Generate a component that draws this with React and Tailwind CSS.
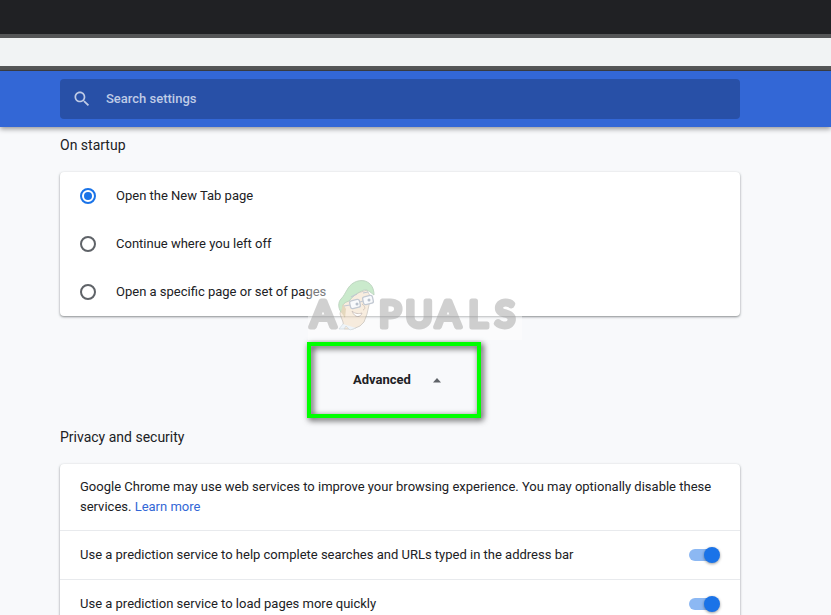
import React from "react";

const startupOptions = [
  "Open the New Tab page",
  "Continue where you left off",
  "Open a specific page or set of pages",
];

const privacyToggles = [
  "Use a prediction service to help complete searches and URLs typed in the address bar",
  "Use a prediction service to load pages more quickly",
];

function SearchBar() {
  return (
    <header className="relative z-10 shrink-0 bg-[#3367d6] py-2 pr-[91px] pl-[60px] shadow-[0_2px_5px_rgba(0,0,0,0.4)]">
      <label className="flex h-10 max-w-[680px] items-center rounded-sm bg-[#2850a7] pl-3 text-[#bfcbe6]">
        <svg viewBox="0 0 24 24" className="size-5 shrink-0" fill="currentColor" aria-hidden="true">
          <path d="M15.5 14h-.79l-.28-.27C15.41 12.59 16 11.11 16 9.500 16 5.910 13.090 3 9.500 3S3 5.910 3 9.500 5.910 16 9.500 16c1.610 0 3.090-.59 4.230-1.570l.27.28v.79l5 4.990L20.490 19l-4.990-5zm-6 0C7.010 14 5 11.990 5 9.500S7.010 5 9.500 5 14 7.010 14 9.500 11.990 14 9.500 14z" />
        </svg>
        <input
          type="text"
          aria-label="Search settings"
          placeholder="Search settings"
          className="ml-3.5 h-full min-w-0 flex-1 bg-transparent pb-0.5 font-medium text-white outline-none placeholder:text-[#bfcbe6]"
        />
      </label>
    </header>
  );
}

function Section({ title, children }) {
  return (
    <section className="pt-2">
      <h2 className="mb-[17px] text-[14px] leading-5">{title}</h2>
      <div className="relative rounded bg-white shadow-[0_1px_2px_rgba(60,64,67,0.4),0_1px_3px_rgba(60,64,67,0.25)]">
        {children}
      </div>
    </section>
  );
}

function RadioRow({ label, defaultChecked }) {
  return (
    <label className="flex h-12 items-center gap-5 px-5">
      <input
        type="radio"
        name="startup"
        defaultChecked={defaultChecked}
        className="grid size-4 shrink-0 appearance-none place-items-center rounded-full border-2 border-[#5f6368] checked:border-[#1a73e8] checked:before:size-2 checked:before:rounded-full checked:before:bg-[#1a73e8]"
      />
      {label}
    </label>
  );
}

function ToggleRow({ label }) {
  return (
    <label className="flex h-[49px] items-center justify-between gap-4 border-t border-[#e8eaed] px-5">
      {label}
      <span className="relative flex h-4 w-8 shrink-0 items-center">
        <input type="checkbox" defaultChecked className="peer sr-only" />
        <span className="ml-px h-3 w-7 rounded-full bg-[#bdc1c6] peer-checked:bg-[#8cb8f3]" />
        <span className="absolute left-0 size-4 rounded-full bg-white shadow-[0_1px_3px_rgba(0,0,0,0.4)] peer-checked:left-4 peer-checked:bg-[#1a73e8]" />
      </span>
    </label>
  );
}

function Watermark() {
  return (
    <svg
      viewBox="0 0 214 64"
      className="pointer-events-none absolute -bottom-6 left-[248px] z-10 h-16 w-[214px]"
      aria-hidden="true"
    >
      <rect y="7" width="214" height="57" fill="#fff" opacity="0.4" />
      <g opacity="0.5">
        <g
          fontFamily="Lato, sans-serif"
          fontSize="37"
          fill="#a2a2a2"
          stroke="#a2a2a2"
          strokeWidth="5"
          strokeLinejoin="round"
          strokeLinecap="round"
          textAnchor="middle"
        >
          <text x="15" y="51">A</text>
          <text x="82 111 140 170 197" y="51">PUALS</text>
        </g>
        <path d="M34 28 41 22 50 17 59 14 62 20 61 29 59 38 56 46 52 50 45 53 36 53 35 46 32 38Z" fill="#f3dcc0" stroke="#9b9284" strokeWidth="0.800" />
        <path d="M33 36C30 32 30 26 33 23 36 20 37 17 39 14 42 8 49 3 57 5 63 7 66 12 66 19 62 16 59 13 56 14 50 16 45 20 41 25 38 26 36 27 35 29L34 36Z" fill="#96d69a" stroke="#7ba780" strokeWidth="0.900" strokeLinejoin="round" />
        <path d="M33 36 35 28 38 33 37 42" fill="#cdb27d" />
        <g fill="#f4f7fa" stroke="#8794a7" strokeWidth="1.300">
          <rect x="42" y="24" width="10" height="8" rx="2" transform="rotate(-13 47 28)" />
          <rect x="55" y="20" width="10" height="8" rx="2" transform="rotate(-13 60 24)" />
        </g>
        <path d="m36 30 6-1m10-3 3-1M43 21l6-3m6-1 5-1" fill="none" stroke="#8794a7" strokeWidth="1.200" />
        <circle cx="49" cy="28" r="1.500" fill="#73839a" />
        <circle cx="61" cy="24" r="1.500" fill="#73839a" />
        <path d="M54 28c3 2 4 5 1 6" fill="none" stroke="#aa8f76" />
        <path d="M44 35c3 3 7 3 10 2-1 4-7 6-10-2Z" fill="#fff" stroke="#9b8579" strokeWidth="0.900" />
        <path d="m35 48-4 5h5l2-3 4 4 6-2" fill="#e2eff7" stroke="#a6b7c1" strokeWidth="0.700" />
      </g>
    </svg>
  );
}

export default function App() {
  return (
    <div className="flex h-screen flex-col overflow-hidden bg-[#f8f9fb] font-['Roboto',sans-serif] text-[13px] leading-5 text-[#202124]">
      <div className="h-[34px] shrink-0 bg-[#202124]" />
      <div className="h-9 shrink-0 border-y-4 border-[#555657] bg-[#f1f3f4]" />
      <div className="h-px shrink-0 bg-[#3c3f45]" />
      <SearchBar />
      <main className="min-h-0 flex-1 overflow-hidden pr-[91px] pl-[60px]">
        <div className="max-w-[680px]">
          <Section title="On startup">
            {startupOptions.map((label, i) => (
              <RadioRow key={label} label={label} defaultChecked={i === 0} />
            ))}
            <Watermark />
          </Section>

          <div className="mt-[26px] mb-px flex justify-center">
            <button type="button" className="relative flex h-[76px] w-[174px] items-center pl-10 font-bold">
              Advanced
              <svg viewBox="0 0 24 24" className="ml-3.5 size-6" fill="#5f6368" aria-hidden="true">
                <path d="M8 14.500 12 10 16 14.500Z" />
              </svg>
              <span className="absolute inset-y-0 right-1.5 -left-1.5 border-4 border-[#00ff00] drop-shadow-[2px_2px_3px_rgba(0,0,0,0.8)]" />
            </button>
          </div>

          <Section title="Privacy and security">
            <p className="px-5 py-[13px]">
              Google Chrome may use web services to improve your browsing experience. You may
              optionally disable these services.{" "}
              <a href="#learn-more" className="text-[#3367d6]">
                Learn more
              </a>
            </p>
            {privacyToggles.map((label) => (
              <ToggleRow key={label} label={label} />
            ))}
          </Section>
        </div>
      </main>
    </div>
  );
}
